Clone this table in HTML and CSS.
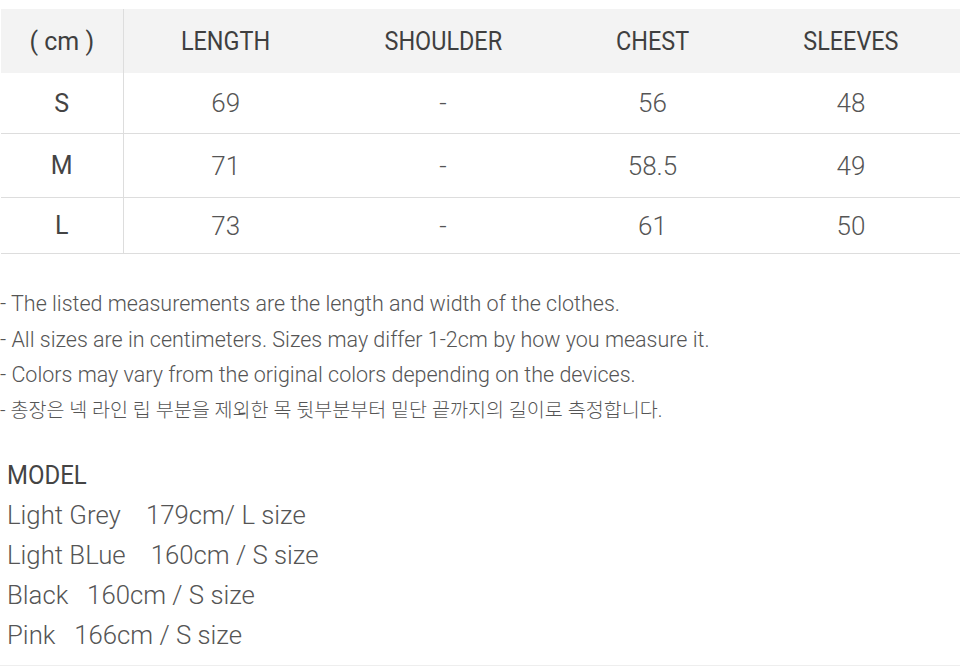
FILE: index.html
```html
<!DOCTYPE html>
<html lang="ko">
<head>
<meta charset="utf-8">
<link rel="stylesheet" href="styles.css">
</head>
<body>
<div class="page">
  <table class="size-table">
    <colgroup>
      <col class="c0"><col class="c1"><col class="c2"><col class="c3"><col class="c4">
    </colgroup>
    <thead>
      <tr class="head">
        <th class="first">( cm )</th><th><span class="hd">LENGTH</span></th><th><span class="hd">SHOULDER</span></th><th><span class="hd">CHEST</span></th><th class="last"><span class="hd">SLEEVES</span></th>
      </tr>
    </thead>
    <tbody>
      <tr class="r1"><td class="first">S</td><td>69</td><td>-</td><td>56</td><td class="last">48</td></tr>
      <tr class="r2"><td class="first">M</td><td>71</td><td>-</td><td>58.5</td><td class="last">49</td></tr>
      <tr class="r3"><td class="first">L</td><td>73</td><td>-</td><td>61</td><td class="last">50</td></tr>
    </tbody>
  </table>
  <ul class="notes">
    <li>- The listed measurements are the length and width of the clothes.</li>
    <li>- All sizes are in centimeters. Sizes may differ 1-2cm by how you measure it.</li>
    <li>- Colors may vary from the original colors depending on the devices.</li>
    <li class="ko">- 총장은 넥 라인 립 부분을 제외한 목 뒷부분부터 밑단 끝까지의 길이로 측정합니다.</li>
  </ul>
  <div class="model">
    <div class="model-title"><span class="hd">MODEL</span></div>
    <div class="model-line">Light Grey&nbsp;&nbsp;&nbsp; 179cm/ L size</div>
    <div class="model-line">Light BLue&nbsp;&nbsp;&nbsp; 160cm / S size</div>
    <div class="model-line">Black&nbsp;&nbsp; 160cm / S size</div>
    <div class="model-line">Pink&nbsp;&nbsp; 166cm / S size</div>
  </div>
</div>
</body>
</html>
```

FILE: styles.css
```css
html, body {
  margin: 0;
  padding: 0;
  background: #fff;
}
body {
  font-family: Roboto, "Noto Sans CJK KR", sans-serif;
  color: #444;
}
.page {
  width: 960px;
  height: 666px;
  padding-top: 9px;
  box-sizing: border-box;
  border-bottom: 1px solid #eee;
  overflow: hidden;
}
.size-table {
  border-collapse: collapse;
  table-layout: fixed;
  width: 959px;
  margin-left: 1px;
}
.c0 { width: 122px; }
.c1 { width: 205px; }
.c2 { width: 230px; }
.c3 { width: 189px; }
.c4 { width: 213px; }
.hd {
  display: inline-block;
  transform: scaleX(0.9);
}
.size-table th {
  background: #f3f3f3;
  font-weight: 400;
  font-size: 26px;
  color: #3f3f3f;
  height: 64px;
  padding: 0;
  text-align: center;
  vertical-align: middle;
}
.size-table th.first {
  font-size: 25px;
}
.size-table td {
  font-weight: 300;
  font-size: 26px;
  color: #555;
  text-align: center;
  vertical-align: middle;
  padding: 0;
  border-bottom: 1px solid #ddd;
}
.size-table .last {
  padding-right: 5px;
}
.size-table .first {
  border-right: 1px solid #ddd;
}
.size-table td.first {
  font-weight: 400;
  font-size: 25px;
  color: #444;
}
.r1 td { height: 60px; }
.r2 td { height: 63px; }
.r3 td { height: 55px; }
.notes {
  list-style: none;
  margin: 32px 0 0 0;
  padding: 0;
}
.notes li {
  font-weight: 300;
  font-size: 21.5px;
  line-height: 35.5px;
  color: #555;
}
.notes li.ko {
  font-size: 19.6px;
}
.model {
  margin-top: 29px;
  padding-left: 7px;
}
.model-title {
  font-size: 25px;
  font-weight: 400;
  color: #444;
  line-height: 38px;
}
.model-title .hd {
  transform: scaleX(0.96);
  transform-origin: left center;
}
.model-line {
  font-size: 25.75px;
  font-weight: 300;
  color: #555;
  line-height: 40px;
}
```
